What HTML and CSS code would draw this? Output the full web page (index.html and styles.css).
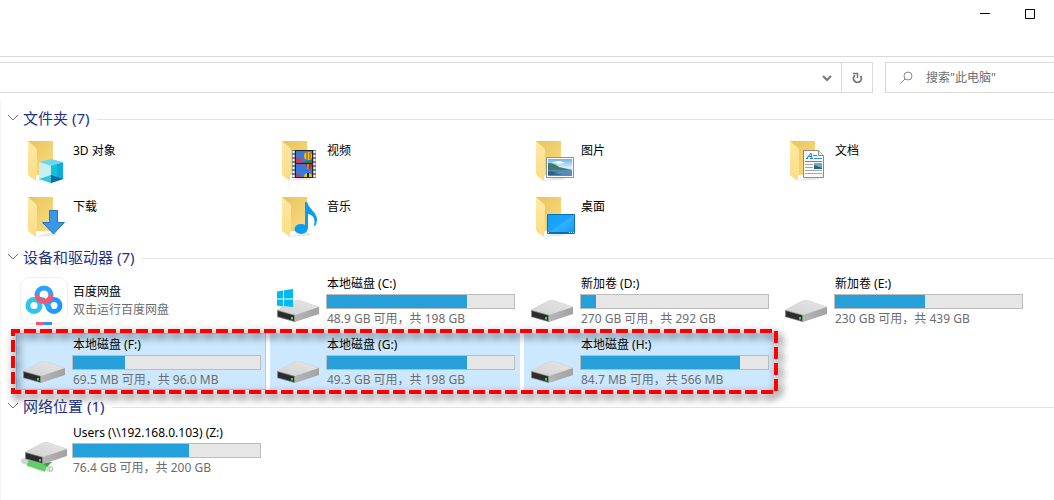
FILE: index.html
```
<!DOCTYPE html>
<html lang="zh-CN">
<head>
	<meta charset="UTF-8">
	<title>此电脑</title>
	<link rel="stylesheet" href="styles.css">
</head>
<body>
	<!-- 公用图标 -->
	<svg class="defs" width="0" height="0" aria-hidden="true">
		<defs>
			<linearGradient id="gBack" x1="0" y1="0" x2="1" y2="1">
				<stop offset="0" stop-color="#e9c35c"/>
				<stop offset="1" stop-color="#f8dc82"/>
			</linearGradient>
			<linearGradient id="gFront" x1="0" y1="0" x2="0" y2="1">
				<stop offset="0" stop-color="#ffe9a6"/>
				<stop offset="1" stop-color="#fcdc82"/>
			</linearGradient>
			<linearGradient id="gSide" x1="0" y1="0" x2="1" y2="0">
				<stop offset="0" stop-color="#c4c4c4"/>
				<stop offset="1" stop-color="#a2a2a2"/>
			</linearGradient>
			<linearGradient id="gTop" x1="0" y1="1" x2="1" y2="0">
				<stop offset="0" stop-color="#d2d2d2"/>
				<stop offset="1" stop-color="#e6e6e6"/>
			</linearGradient>
			<linearGradient id="gDesk" x1="0" y1="0" x2="1" y2="1">
				<stop offset="0" stop-color="#12a0fb"/>
				<stop offset=".5" stop-color="#18a4ff"/>
				<stop offset=".51" stop-color="#35b0ff"/>
				<stop offset="1" stop-color="#0d98f5"/>
			</linearGradient>
			<linearGradient id="gSky" x1="0" y1="0" x2="0" y2="1">
				<stop offset="0" stop-color="#6cb3ea"/>
				<stop offset=".5" stop-color="#d8eff8"/>
				<stop offset="1" stop-color="#7fb4dc"/>
			</linearGradient>
			<symbol id="folder" viewBox="0 0 48 48">
				<path d="M14 44l20-1 4-2-6-2z" fill="#e8e8e8"/>
				<path d="M8 4h25v34H15z" fill="url(#gBack)"/>
				<path d="M8 4l8 7q1 1 1 3v24l-1 1v5l-7-5q-1-1-1-3z" fill="url(#gFront)"/>
			</symbol>
			<symbol id="drive" viewBox="0 0 48 48">
				<path d="M3 34L20 25q2-1 5-1l20 7v7L21 46 3 41z" fill="url(#gSide)"/>
				<path d="M3 34L20 25q2-1 5-1l20 7-24 8z" fill="url(#gTop)"/>
				<path d="M3 34l18 5v7L3 41z" fill="#8a8a8a"/>
				<path d="M4 35l16 4.500v5.500L4 40.500z" fill="#2c2c2c"/>
				<path d="M17 41h2v2.500h-2z" fill="#2fe04a"/>
			</symbol>
		</defs>
	</svg>

	<header class="titlebar">
		<button type="button" class="win-btn" aria-label="最小化">
			<svg width="10" height="10"><path d="M0 4.500h10" stroke="#000"/></svg>
		</button>
		<button type="button" class="win-btn" aria-label="最大化">
			<svg width="10" height="10"><path d="M.5.5h9v9h-9z" fill="none" stroke="#000"/></svg>
		</button>
	</header>

	<div class="toolbar">
		<div class="address">
			<button type="button" class="addr-btn" aria-label="以前的位置">
				<svg width="10" height="8"><path d="M1 2l4 4 4-4" fill="none" stroke="#777" stroke-width="2"/></svg>
			</button>
			<button type="button" class="addr-btn refresh" aria-label="刷新">
				<svg width="12" height="12">
					<path d="M4 3.200A4 4 0 1 0 9.500 3.800" fill="none" stroke="#777" stroke-width="1.800"/>
					<path d="M2 1.500h4.500V6" fill="none" stroke="#777" stroke-width="1.500"/>
				</svg>
			</button>
		</div>
		<label class="search">
			<svg width="14" height="14"><path d="M.5 12.500l4.700-4.700" stroke="#888"/><circle cx="8" cy="5" r="4" fill="none" stroke="#888"/></svg>
			<input type="text" placeholder='搜索"此电脑"' aria-label="搜索">
		</label>
	</div>

	<main class="files">
		<section>
			<h2 class="group"><svg width="12" height="8"><path d="M1 1l5 5 5-5" fill="none" stroke="#777"/></svg>文件夹 (7)</h2>
			<div class="grid folders">
				<div class="item">
					<svg class="icon" viewBox="0 0 48 48">
						<use href="#folder"/>
						<path d="M19 25l12-3 12 3-12 4z" fill="#6bd8ea"/>
						<path d="M19 25l12 4v17l-12-4z" fill="#c9eff2"/>
						<path d="M43 25l-12 4v17l12-4z" fill="#12a9dc"/>
						<path d="M31 29l6-2v13l-6-2z" fill="#0ec3da"/>
						<path d="M19 42l12-4v8z" fill="#35c6d8"/>
						<path d="M43 42l-12-4v8z" fill="#096e9e"/>
					</svg>
					<div class="info"><div class="name">3D 对象</div></div>
				</div>
				<div class="item">
					<svg class="icon" viewBox="0 0 48 48">
						<use href="#folder"/>
						<path d="M18 13h24v28H18z" fill="#777"/>
						<path d="M19.500 14v27M40.500 14v27" stroke="#fff" stroke-width="2" stroke-dasharray="2 2"/>
						<path d="M21 13h18v28H21z" fill="#222"/>
						<path d="M22 14h16v12H22zM22 27h16v13H22z" fill="#3c78d8"/>
						<path d="M22 21q3-2 6 2l2 3h-8z" fill="#c4405c"/>
						<path d="M29 25l9-2v3h-9z" fill="#21804a"/>
						<circle cx="34" cy="19" r="4" fill="#e8c51c"/>
						<path d="M33 15v8M36 16v6" stroke="#a93220"/>
						<path d="M31 27h8l-3 5h-2z" fill="#b22c35"/>
						<path d="M34 27v5" stroke="#f0ce20"/>
						<path d="M30 40a4 4 0 0 1 8 0z" fill="#e8c51c"/>
						<path d="M22 38l3-1 3 3h-6z" fill="#c4405c"/>
						<path d="M34 36v4" stroke="#222" stroke-width="2"/>
					</svg>
					<div class="info"><div class="name">视频</div></div>
				</div>
				<div class="item">
					<svg class="icon" viewBox="0 0 48 48">
						<use href="#folder"/>
						<path d="M18.500 20.500h27v20h-27z" fill="#fff" stroke="#8f8f8f"/>
						<path d="M20 22h24v17H20z" fill="url(#gSky)"/>
						<path d="M20 26q6 0 11 4l13 3H20z" fill="#397c68"/>
						<path d="M20 33h24v6H20z" fill="#568ebb"/>
						<path d="M20 34l12 1-7 1 10 2H20z" fill="#28627f"/>
						<path d="M24 25l8-1 5 2-7 1z" fill="#fff"/>
					</svg>
					<div class="info"><div class="name">图片</div></div>
				</div>
				<div class="item">
					<svg class="icon" viewBox="0 0 48 48">
						<use href="#folder"/>
						<path d="M21.500 13.500h15l5 5v22h-20z" fill="#fafafa" stroke="#8b8b8b"/>
						<path d="M36.500 13.500v5h5" fill="#e6e6e6" stroke="#8b8b8b"/>
						<path d="M24 21.500h2M28 21.500h3M26 19.500h4M25 21l4-5 1 5" fill="none" stroke="#1687c5"/>
						<path d="M31 18.500h4M32 21.500h8M23 24.500h17" stroke="#2498db"/>
						<path d="M23 27.500h8M23 30.500h8M23 33.500h17M23 36.500h17" stroke="#a6a6a6"/>
						<path d="M32 26h8v6h-8z" fill="#6ba8d8"/>
						<path d="M32 28l8 3v1h-8z" fill="#246b62"/>
					</svg>
					<div class="info"><div class="name">文档</div></div>
				</div>
				<div class="item">
					<svg class="icon" viewBox="0 0 48 48">
						<use href="#folder"/>
						<path d="M29.500 17.500h8v12h7L33.500 41 22.500 29.500h7z" fill="#3b97e6" stroke="#2377bd"/>
					</svg>
					<div class="info"><div class="name">下载</div></div>
				</div>
				<div class="item">
					<svg class="icon" viewBox="0 0 48 48">
						<use href="#folder"/>
						<ellipse cx="27" cy="36" rx="6.500" ry="5" fill="#0a9cf5"/>
						<path d="M31 9h2q1 4 5 8 5 5 5 10-.5 4-2 6h-1q2-8-3-11-2-1-3-1v15h-3z" fill="#0a9cf5"/>
					</svg>
					<div class="info"><div class="name">音乐</div></div>
				</div>
				<div class="item">
					<svg class="icon" viewBox="0 0 48 48">
						<use href="#folder"/>
						<path d="M19.500 21.500h27v19h-27z" fill="url(#gDesk)" stroke="#0b6fb3"/>
						<path d="M20 39.500h26" stroke="#0b6fb3"/>
						<path d="M20 39.500h1M41 39.500h1M43 39.500h1M45 39.500h1" stroke="#fff"/>
					</svg>
					<div class="info"><div class="name">桌面</div></div>
				</div>
			</div>
		</section>

		<section>
			<h2 class="group"><svg width="12" height="8"><path d="M1 1l5 5 5-5" fill="none" stroke="#777"/></svg>设备和驱动器 (7)</h2>
			<div class="grid drives">
				<div class="item app">
					<svg class="icon" viewBox="0 0 48 48">
						<rect x=".5" y="1.500" width="47" height="46" rx="9" fill="#fff" stroke="#eee"/>
						<g fill="none" stroke-width="5">
							<circle cx="14" cy="29.500" r="6" stroke="#2fc4f1"/>
							<circle cx="34" cy="29.500" r="6" stroke="#2496ff"/>
							<path d="M18 25q4-3 7 1l5 7" stroke="#28a8f8"/>
							<path d="M17 19a7 7 0 0 1 14 0" stroke="#2ba4fa"/>
							<path d="M17 18.500a7 7 0 0 0 14 0" stroke="#fb5270"/>
						</g>
						<path d="M16 46h8v3h-8z" fill="#fb5270"/>
						<path d="M24 46h8v3h-8z" fill="#2b95fb"/>
					</svg>
					<div class="info">
						<div class="name">百度网盘</div>
						<div class="sub">双击运行百度网盘</div>
					</div>
				</div>
				<div class="item">
					<svg class="icon" viewBox="0 0 48 48">
						<use href="#drive"/>
						<path d="M3 15.500l6-1v8H3zM10 14.300l9-1.300v9.500h-9zM3 23.500h6v7l-6-1zM10 23.500h9V31l-9-1z" fill="#00b9f1"/>
					</svg>
					<div class="info">
						<div class="name">本地磁盘 (C:)</div>
						<div class="bar"><div class="used" style="width:75%"></div></div>
						<div class="sub">48.9 GB 可用，共 198 GB</div>
					</div>
				</div>
				<div class="item">
					<svg class="icon"><use href="#drive"/></svg>
					<div class="info">
						<div class="name">新加卷 (D:)</div>
						<div class="bar"><div class="used" style="width:8%"></div></div>
						<div class="sub">270 GB 可用，共 292 GB</div>
					</div>
				</div>
				<div class="item">
					<svg class="icon"><use href="#drive"/></svg>
					<div class="info">
						<div class="name">新加卷 (E:)</div>
						<div class="bar"><div class="used" style="width:48%"></div></div>
						<div class="sub">230 GB 可用，共 439 GB</div>
					</div>
				</div>
				<div class="item selected focus">
					<svg class="icon"><use href="#drive"/></svg>
					<div class="info">
						<div class="name">本地磁盘 (F:)</div>
						<div class="bar"><div class="used" style="width:28%"></div></div>
						<div class="sub">69.5 MB 可用，共 96.0 MB</div>
					</div>
				</div>
				<div class="item selected">
					<svg class="icon"><use href="#drive"/></svg>
					<div class="info">
						<div class="name">本地磁盘 (G:)</div>
						<div class="bar"><div class="used" style="width:75%"></div></div>
						<div class="sub">49.3 GB 可用，共 198 GB</div>
					</div>
				</div>
				<div class="item selected">
					<svg class="icon"><use href="#drive"/></svg>
					<div class="info">
						<div class="name">本地磁盘 (H:)</div>
						<div class="bar"><div class="used" style="width:85%"></div></div>
						<div class="sub">84.7 MB 可用，共 566 MB</div>
					</div>
				</div>
				<!-- 红色虚线框 -->
				<div class="mark"><svg width="100%" height="100%"><rect width="100%" height="100%"/></svg></div>
			</div>
		</section>

		<section>
			<h2 class="group"><svg width="12" height="8"><path d="M1 1l5 5 5-5" fill="none" stroke="#777"/></svg>网络位置 (1)</h2>
			<div class="grid network">
				<div class="item">
					<svg class="icon" viewBox="0 0 48 48">
						<path d="M4 36l26 8" stroke="#d5d5d5" stroke-width="6" stroke-linecap="round"/>
						<circle cx="31" cy="44" r="2" fill="#f2f2f2" stroke="#bbb"/>
						<path d="M8 37l18 6" stroke="#5fd066" stroke-width="8"/>
						<path d="M22 38l10-1-5 5z" fill="#37a544"/>
						<use href="#drive" x="2" y="-7"/>
					</svg>
					<div class="info">
						<div class="name">Users (\\192.168.0.103) (Z:)</div>
						<div class="bar"><div class="used" style="width:62%"></div></div>
						<div class="sub">76.4 GB 可用，共 200 GB</div>
					</div>
				</div>
			</div>
		</section>
	</main>
</body>
</html>
```
FILE: styles.css
```
*{
	margin:0;
	padding:0;
	box-sizing: border-box;
}
body{
	font:12px/16px "Noto Sans","Noto Sans CJK SC",sans-serif;
	color:#000;
	background: #fff;
}
button{
	border:0;
	background: none;
}
svg{
	flex:none;
}
.defs{
	position: absolute;
}

/*标题栏*/
.titlebar{
	display: flex;
	justify-content: flex-end;
	height: 57px;
	border-bottom:1px solid #d9d9d9;
}
.win-btn{
	display: flex;
	justify-content: center;
	align-items: center;
	width: 45px;
	height: 28px;
}
.win-btn:last-child{
	margin-right: 2px;
}

/*地址栏*/
.toolbar{
	display: flex;
	gap:12px;
	padding:5px 0 7px;
}
.address{
	display: flex;
	justify-content: flex-end;
	flex:1;
	height: 31px;
	border:1px solid #d9d9d9;
	border-left: 0;
}
.addr-btn{
	display: flex;
	justify-content: center;
	align-items: center;
	width: 29px;
}
.refresh{
	width: 31px;
	border-left:1px solid #d9d9d9;
}
.search{
	display: flex;
	align-items: center;
	gap:12px;
	width: 169px;
	height: 31px;
	padding-left: 14px;
	border:1px solid #d9d9d9;
	border-right: 0;
}
.search input{
	flex:1;
	min-width: 0;
	border:0;
	outline: 0;
	background: none;
	font:inherit;
}
.search input::placeholder{
	color:#6d6d6d;
	opacity: 1;
}

/*文件列表*/
.files{
	min-height: calc(100vh - 100px);
	padding-top: 5px;
	border-left: 1px solid #f5f5f5;
}
.group{
	display: flex;
	align-items: center;
	height: 28px;
	padding:0 0 2px 6px;
	font-size: 15px;
	line-height: 20px;
	font-weight: normal;
	color:#1e3287;
}
.group svg{
	margin-right: 4px;
}
.group:after{
	content:'';
	flex:1;
	height: 1px;
	margin:2px 0 0 8px;
	background: #e2e2e2;
}
.grid{
	position: relative;
	display: grid;
	grid-template-columns: repeat(auto-fill,250px);
	gap:4px;
	padding:0 0 3px 15px;
}
.folders{
	grid-auto-rows: 52px;
}
.drives{
	grid-template-rows: 57px 57px;
}
.item{
	display: flex;
	gap:4px;
	padding:4px 5px 0 4px;
}
.icon{
	width: 48px;
	height: 48px;
	overflow: visible;
}
.info{
	flex:1;
}
.folders .info{
	padding-top: 6px;
}
.app .info{
	padding-top: 8px;
}
.name,.sub{
	padding-left: 1px;
	white-space: nowrap;
}
.sub{
	margin-top: 2px;
	color:#6d6d6d;
}
.bar{
	height: 15px;
	margin-top: 2px;
	border:1px solid #bcbcbc;
	background: #e6e6e6;
}
.used{
	height: 100%;
	background: #26a0da;
}
.selected{
	background: #cce8ff;
}
.focus{
	box-shadow: inset 0 0 0 1px #99d1ff;
}
.mark{
	position: absolute;
	grid-column: 1/4;
	grid-row: 2/3;
	top:-2px;
	right:-2px;
	bottom:-2px;
	left:-3px;
	pointer-events: none;
	filter: drop-shadow(3px 4px 4px rgba(0,0,0,.75));
}
.mark svg{
	display: block;
	overflow: visible;
}
.mark rect{
	fill:none;
	stroke:#f00;
	stroke-width: 4px;
	stroke-dasharray: 12 4;
	stroke-dashoffset: 5px;
}
```
